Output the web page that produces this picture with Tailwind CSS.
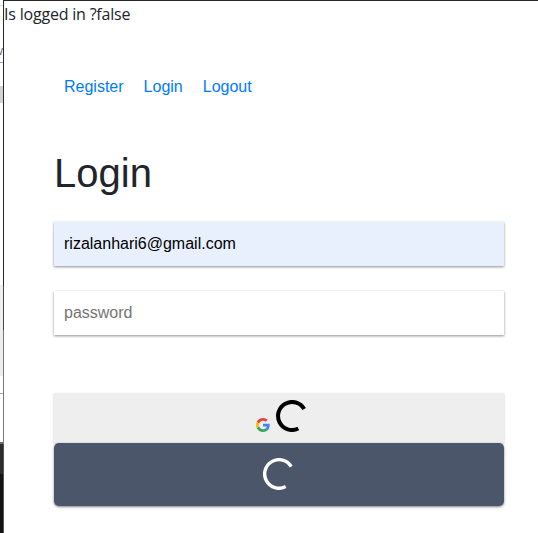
<!DOCTYPE html>
<html lang="en">
<head>
<meta charset="utf-8">
<title>Login</title>
<script src="https://cdn.jsdelivr.net/npm/@tailwindcss/browser@4"></script>
</head>
<body class="flex h-[533px] w-[538px] overflow-hidden bg-white font-['Liberation_Sans',Arial,sans-serif] text-base text-[#212529]">
<!-- Edge of the window behind -->
<aside class="flex w-[3px] shrink-0 flex-col overflow-hidden bg-white">
  <div class="h-[6px] border-b border-gray-300"></div>
  <div class="flex h-[57px] items-end justify-end border-b border-gray-400 pb-[2px] text-[13px] text-gray-500"><span>w</span></div>
  <div class="h-[23px]"></div>
  <div class="h-[17px] bg-[#d2d2d2]"></div>
  <div class="h-[182px]"></div>
  <div class="h-[91px] bg-[#eeeeee]"></div>
  <div class="h-[18px] border-b border-gray-400"></div>
  <div class="h-[50px] border-b-2 border-gray-500"></div>
  <div class="h-[30px] bg-[#2d2c2c]"></div>
  <div class="grow bg-[#151414]"></div>
</aside>
<div class="flex w-px shrink-0 flex-col">
  <div class="h-[286px] bg-[#2b2728]"></div>
  <div class="h-[44px] bg-[#4a4848]"></div>
  <div class="h-[114px] bg-[#777777]"></div>
  <div class="grow bg-[#555353]"></div>
</div>
<main class="flex grow flex-col border-t border-[#2b2728]">
  <p class="h-6 whitespace-nowrap font-['Open_Sans','Noto_Sans',sans-serif] text-base leading-[26px] tracking-[-0.2px]">Is logged in ?false</p>
  <div class="flex w-[500px] flex-col pl-[50px] pt-[50px]">
    <nav class="flex h-6 gap-5 pl-[10px] leading-6 text-[#007bff]">
      <a>Register</a><a>Login</a><a>Logout</a>
    </nav>
    <h1 class="mt-[50px] h-12 text-[40px] leading-[48px]">Login</h1>
    <div class="mt-[25px] flex h-[44px] w-[450px] items-center bg-[#e8f0fe] pl-[10px] text-black shadow-[0_1px_3px_rgba(0,0,0,0.24),0_1px_2px_rgba(0,0,0,0.24)]">rizalanhari6@gmail.com</div>
    <div class="mt-[25px] flex h-[44px] w-[450px] items-center bg-white pl-[10px] text-[#757575] shadow-[0_1px_3px_rgba(0,0,0,0.24),0_1px_2px_rgba(0,0,0,0.24)]">password</div>
    <div class="mt-[58px] flex h-[50px] w-[450px] bg-[#eeeeee] pl-[202px] shadow-[0_1px_2px_rgba(0,0,0,0.24)]">
      <svg class="mt-[25px] size-[14px]" viewBox="0 0 48 48">
        <path fill="#EA4335" d="M24 9.5c3.54 0 6.71 1.22 9.21 3.6l6.85-6.85C35.9 2.38 30.47 0 24 0 14.62 0 6.51 5.38 2.56 13.22l7.98 6.19C12.43 13.72 17.74 9.5 24 9.5z"/>
        <path fill="#4285F4" d="M46.98 24.55c0-1.57-.15-3.09-.38-4.55H24v9.02h12.94c-.58 2.96-2.26 5.48-4.78 7.18l7.73 6c4.51-4.18 7.09-10.36 7.09-17.65z"/>
        <path fill="#FBBC05" d="M10.53 28.59c-.48-1.45-.76-2.99-.76-4.59s.27-3.14.76-4.59l-7.98-6.19C.92 16.46 0 20.12 0 24s.92 7.54 2.56 10.78l7.97-6.19z"/>
        <path fill="#34A853" d="M24 48c6.48 0 11.93-2.13 15.89-5.81l-7.73-6c-2.15 1.45-4.92 2.3-8.16 2.3-6.26 0-11.57-4.22-13.47-9.91l-7.98 6.19C6.51 42.62 14.62 48 24 48z"/>
      </svg>
      <svg class="ml-[6px] mt-[7px] size-8" viewBox="0 0 32 32" fill="none" stroke="#000" stroke-width="4">
        <path d="M28.2 9A14 14 0 1 0 22.3 28.5"/>
      </svg>
    </div>
    <div class="flex h-[63px] w-[450px] rounded-[5px] bg-[#4b566b] pl-[209px] pt-[15px] shadow-[0_1px_3px_rgba(0,0,0,0.3),0_1px_2px_rgba(0,0,0,0.24)]">
      <svg class="size-8" viewBox="0 0 32 32" fill="none" stroke="#fff" stroke-width="3.4">
        <path d="M28.2 8.6A14.3 14.3 0 1 0 22.7 28.6"/>
      </svg>
    </div>
  </div>
</main>
</body>
</html>
